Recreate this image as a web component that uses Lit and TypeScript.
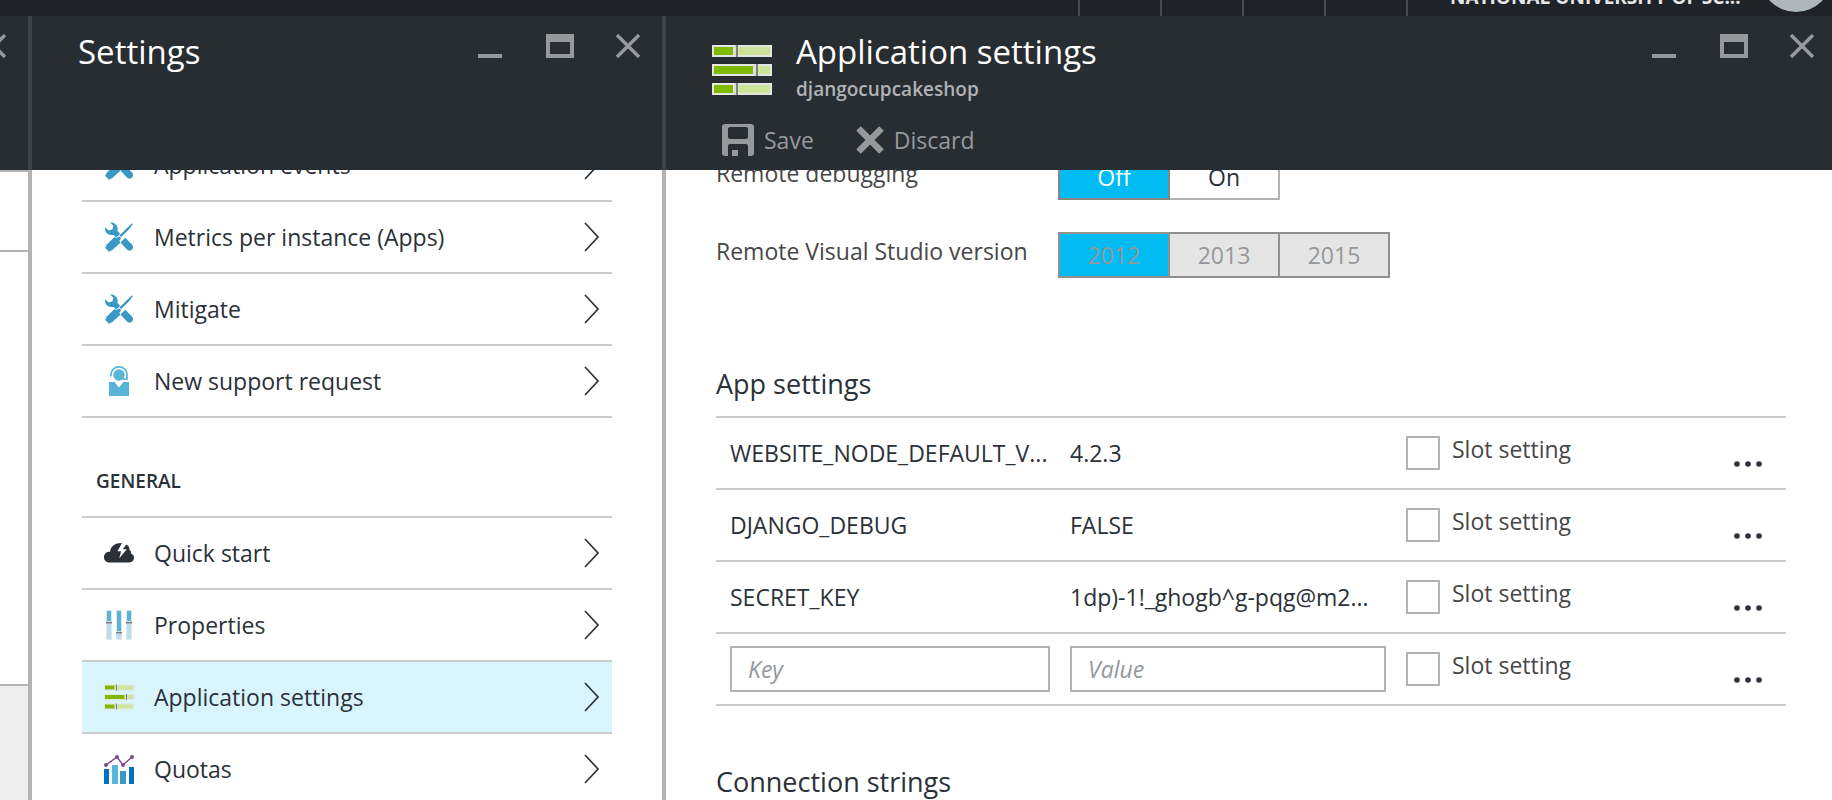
import { LitElement, html, css, svg } from "lit";
import { customElement, property, state } from "lit/decorators.js";

type IconName = "tools" | "support" | "cloud" | "properties" | "sliders" | "quotas";

const sliderBar = (y: number, split: number) => svg`
  <rect x="0" y=${y} width="60" height="12" fill="#e4e6e4"></rect>
  <rect x="2" y=${y + 2} width=${split - 2} height="8" fill="#7fba00"></rect>
  <rect x=${split + 5} y=${y + 2} width=${53 - split} height="8" fill="#cde49b"></rect>
  <rect x=${split + 1} y=${y} width="2" height="12" fill="#dcdcdc"></rect>
  <rect x=${split + 3} y=${y} width="2" height="12" fill="#808080"></rect>`;

const sliderIcon = (width: number, height: number) => html`
  <svg width=${width} height=${height} viewBox="0 0 60 52" aria-hidden="true">
    ${sliderBar(1, 21)}${sliderBar(20, 41)}${sliderBar(39, 21)}
  </svg>`;

const propertyBar = (x: number, split: number) => svg`
  <rect x=${x} y="0" width="6" height="30" fill="#e4e8ea"></rect>
  <rect x=${x + 1} y="1" width="4" height=${split - 1} fill="#59b4d9"></rect>
  <rect x=${x + 1} y=${split} width="4" height=${29 - split} fill="#b8dff0"></rect>
  <rect x=${x} y=${split} width="6" height="1" fill="#d8d8d8"></rect>
  <rect x=${x} y=${split + 1} width="6" height="1.4" fill="#7a7a7a"></rect>`;

const icons: Record<IconName, unknown> = {
  tools: html`<svg width="30" height="30" viewBox="0 0 30 30" aria-hidden="true">
    <path fill="#3999c6" d="M6 .6C9 0 12.600 2 13.400 5c.4 1.600.2 2.800.1 4.100l2.700 2.600-3.900 3.900-2.800-2.700c-3.500.8-7.500-.9-8.600-5.400L1 5.400l3.800 3 3.800-1.200.7-3.500z"></path>
    <path fill="#3999c6" d="M28.900 1.200l-.6 1.900-3.600 4.600-7.600 7.400-1.700-1.700 7.600-7.500 4.300-3.800z"></path>
    <path fill="#3999c6" d="M15.700 14.700l1.700 1.600-1.900 2.300.6 2.400-8.300 7.600-1.200-.1-1.300 1.400L1 25.700l1.200-1.300v-1.300l8.200-7.800 2.400.7 1.500-1.400z"></path>
    <path fill="#3999c6" d="M21.300 15.700l6.700 6.700c1.700 1.900 1.300 4-.2 5.300-1.500 1.300-3.300 1.300-4.900-.2l-6.500-6.900z"></path>
  </svg>`,
  support: html`<svg width="30" height="30" viewBox="0 0 30 30" aria-hidden="true">
    <circle cx="15" cy="9" r="5.700" fill="#59b4d9"></circle>
    <path fill="none" stroke="#59b4d9" stroke-width="1.700" d="M7 10.500V8.500a8 7.600 0 0 1 16 0v4.700h-4.500"></path>
    <path fill="#59b4d9" d="M5 16h5.500l4.500 5.500 4.500-5.500H25v14H5z"></path>
  </svg>`,
  cloud: html`<svg width="30" height="30" viewBox="0 0 30 30" aria-hidden="true">
    <path fill="#2b3138" d="M6 24.500c-3.700 0-6-2.200-6-5.300 0-3.300 2.600-5.600 6-5.300C6.500 9 10 5.600 15 5.200l3-.2-4.500 8.300h3.600l-1.800 6.900 7.500-9h-4l3.400-4.800c2 .7 3.500 2.500 3.300 5.500 2 .9 1.500 2.500 1.400 3.500 2 .9 3.100 2.100 3.100 4.200 0 3.100-1.700 4.900-4.600 4.900z"></path>
  </svg>`,
  properties: html`<svg width="30" height="30" viewBox="0 0 30 30" aria-hidden="true">
    ${propertyBar(2, 11)}${propertyBar(12, 21)}${propertyBar(22, 11)}
  </svg>`,
  sliders: sliderIcon(30, 26),
  quotas: html`<svg width="30" height="30" viewBox="0 0 30 30" aria-hidden="true">
    <path fill="#0072c6" d="M0 15h5v15H0zM25 13h5v17h-5z"></path>
    <path fill="#59b4d9" d="M8 11h6v19H8z"></path>
    <path fill="#3999c6" d="M16 17h6v13h-6z"></path>
    <path fill="none" stroke="#7b3a96" stroke-width="1.300" d="M2 11L13 3l6 8 9-8"></path>
    <g fill="#804998"><circle cx="2" cy="11" r="2"></circle><circle cx="13" cy="3" r="2"></circle><circle cx="19" cy="11" r="2"></circle><circle cx="28" cy="3" r="2"></circle></g>
  </svg>`,
};

const closeGlyph = html`<svg width="24" height="24" viewBox="0 0 24 24" aria-hidden="true">
  <path d="M1 1l22 22M23 1L1 23" stroke="#97999c" stroke-width="3.400" fill="none"></path>
</svg>`;

const base = css`
  *, *::before, *::after { box-sizing: border-box; }
  button {
    margin: 0;
    padding: 0;
    border: 0;
    background: none;
    font: inherit;
    color: inherit;
    cursor: pointer;
  }
  svg { display: block; flex: none; }
  h1, h2, h3, p, ul { margin: 0; padding: 0; }
`;

@customElement("blade-controls")
export class BladeControls extends LitElement {
  static styles = [base, css`
    .controls { display: flex; align-items: center; }
    .minimize { margin-right: 44px; }
    .maximize { margin-right: 42px; }
  `];

  render() {
    return html`<div class="controls">
      <button class="minimize" aria-label="Minimize">
        <svg width="24" height="24" viewBox="0 0 24 24" aria-hidden="true"><path d="M0 20h24v4H0z" fill="#97999c"></path></svg>
      </button>
      <button class="maximize" aria-label="Maximize">
        <svg width="28" height="24" viewBox="0 0 28 24" aria-hidden="true"><path fill-rule="evenodd" d="M0 0h28v24H0zM4 8v12h20V8z" fill="#97999c"></path></svg>
      </button>
      <button aria-label="Close">${closeGlyph}</button>
    </div>`;
  }
}

@customElement("settings-row")
export class SettingsRow extends LitElement {
  @property() label = "";
  @property() icon: IconName = "tools";
  @property({ type: Boolean }) selected = false;

  static styles = [base, css`
    :host { display: block; }
    .row {
      display: flex;
      align-items: center;
      height: 72px;
      padding: 0 12px 0 22px;
      border-bottom: 2px solid #cbcbcb;
      color: #2b3138;
      text-decoration: none;
    }
    .selected { background: #d8f5fe; }
    .icon { flex: none; width: 30px; margin-right: 20px; }
    .label { flex: 1; min-width: 0; white-space: nowrap; }
  `];

  render() {
    return html`<a class="row ${this.selected ? "selected" : ""}" href="#">
      <span class="icon">${icons[this.icon]}</span>
      <span class="label">${this.label}</span>
      <svg width="17" height="30" viewBox="0 0 17 30" aria-hidden="true">
        <path d="M2 1l13 14L2 29" fill="none" stroke="#2b3138" stroke-width="1.700"></path>
      </svg>
    </a>`;
  }
}

@customElement("option-picker")
export class OptionPicker extends LitElement {
  @property() label = "";
  @property({ attribute: false }) options: string[] = [];
  @property() value = "";
  @property({ type: Boolean }) disabled = false;

  static styles = [base, css`
    :host { display: block; }
    .field { display: flex; align-items: flex-start; }
    .name { width: 342px; line-height: 38px; color: #474747; }
    .group { display: flex; }
    .option {
      width: 110px;
      height: 46px;
      border: 2px solid #b3b3b3;
      border-left: 0;
      background: #fff;
      color: #2b3138;
    }
    .option:first-child { width: 112px; border-left: 2px solid #b3b3b3; }
    .option.active, .option.active:first-child {
      border-color: #868686;
      background: #00bcf2;
      color: #fff;
    }
    .option:disabled, .option.active:disabled {
      border-color: #909090;
      color: #95989b;
      cursor: default;
    }
    .option:disabled:not(.active) { background: #e5e5e5; }
  `];

  render() {
    return html`<div class="field">
      <span class="name" id="name">${this.label}</span>
      <div class="group" role="group" aria-labelledby="name">
        ${this.options.map((o) => html`<button
          class="option ${o === this.value ? "active" : ""}"
          aria-pressed=${o === this.value ? "true" : "false"}
          ?disabled=${this.disabled}
          @click=${() => { this.value = o; }}>${o}</button>`)}
      </div>
    </div>`;
  }
}

@customElement("app-settings-table")
export class AppSettingsTable extends LitElement {
  @state() private rows = [
    { key: "WEBSITE_NODE_DEFAULT_V...", value: "4.2.3" },
    { key: "DJANGO_DEBUG", value: "FALSE" },
    { key: "SECRET_KEY", value: "1dp)-1!_ghogb^g-pqg@m2..." },
  ];

  static styles = [base, css`
    :host { display: block; }
    .table {
      width: 100%;
      table-layout: fixed;
      border-collapse: separate;
      border-spacing: 0;
      border-top: 2px solid #cbcbcb;
      color: #2b3138;
    }
    td { height: 72px; padding: 0; border-bottom: 2px solid #cbcbcb; white-space: nowrap; }
    .key { width: 354px; padding: 0 20px 0 14px; }
    .value { width: 336px; padding-right: 20px; }
    .more { width: 60px; padding: 0 16px 13px 0; vertical-align: bottom; }
    .more button { display: block; margin-left: auto; padding: 8px; }
    .text {
      display: block;
      width: 100%;
      height: 46px;
      padding: 0 16px;
      border: 2px solid #b3b3b3;
      border-radius: 0;
      background: #fff;
      font: inherit;
      color: inherit;
    }
    .text::placeholder { color: #95989b; font-style: italic; opacity: 1; }
    .slot { display: flex; align-items: flex-start; gap: 12px; line-height: 26px; color: #474747; }
    .check {
      appearance: none;
      flex: none;
      width: 34px;
      height: 34px;
      margin: 0;
      border: 2px solid #b3b3b3;
      background: #fff;
    }
    .check:checked { background: #00bcf2; }
  `];

  private tail() {
    return html`
      <td><label class="slot"><input class="check" type="checkbox">Slot setting</label></td>
      <td class="more"><button aria-label="More">
        <svg width="28" height="6" viewBox="0 0 28 6" aria-hidden="true" fill="#2b3138">
          <circle cx="3" cy="3" r="2.800"></circle><circle cx="14" cy="3" r="2.800"></circle><circle cx="25" cy="3" r="2.800"></circle>
        </svg>
      </button></td>`;
  }

  render() {
    return html`<table class="table" aria-label="App settings">
      <tbody>
        ${this.rows.map((r) => html`<tr><td class="key">${r.key}</td><td class="value">${r.value}</td>${this.tail()}</tr>`)}
        <tr>
          <td class="key"><input class="text" type="text" placeholder="Key" aria-label="Key"></td>
          <td class="value"><input class="text" type="text" placeholder="Value" aria-label="Value"></td>
          ${this.tail()}
        </tr>
      </tbody>
    </table>`;
  }
}

@customElement("app-root")
export class AppRoot extends LitElement {
  static styles = [base, css`
    :host {
      display: flex;
      flex-direction: column;
      height: 100vh;
      overflow: hidden;
      background: #fff;
      font-family: "Open Sans", "Segoe UI", sans-serif;
      font-size: 23px;
      line-height: 30px;
      color: #2b3138;
    }
    /* The page is scrolled so that only the foot of the top bar shows. */
    .topbar {
      flex: none;
      display: flex;
      justify-content: flex-end;
      height: 80px;
      margin-top: -64px;
      background: #1f2328;
      color: #e6e6e6;
    }
    .tool { width: 82px; border-left: 2px solid #4a4c50; }
    .account {
      display: flex;
      align-items: center;
      justify-content: space-between;
      width: 426px;
      padding-left: 42px;
      border-left: 2px solid #4a4c50;
    }
    .tenant {
      align-self: flex-end;
      padding-bottom: 6px;
      font-size: 19px;
      line-height: 26px;
      font-weight: 700;
      white-space: nowrap;
    }
    .avatar { flex: none; width: 72px; height: 72px; border-radius: 50%; background: #b0b7bc; }

    .blades { flex: 1; min-height: 0; display: flex; }
    .blade { display: flex; flex-direction: column; min-width: 0; }
    .previous { flex: none; width: 32px; }
    .settings { flex: none; width: 634px; }
    .application { flex: 1; }
    .head {
      flex: none;
      height: 154px;
      background: #282d31;
      color: #fff;
    }
    .body { flex: 1; min-height: 0; overflow: hidden; }
    .previous .head, .settings .head { border-right: 4px solid #3e4347; }
    .previous .body, .settings .body { border-right: 4px solid #b3b3b3; }

    .previous .head { display: flex; justify-content: flex-end; align-items: flex-start; padding: 18px 22px 0 0; overflow: hidden; }
    .previous .body { display: flex; flex-direction: column; border-top: 2px solid #b3b3b3; }
    .tile { flex: none; height: 80px; border-bottom: 2px solid #b3b3b3; }
    .tile.tall { height: 434px; }
    .rest { flex: 1; background: #eee; }

    .titlebar { display: flex; align-items: flex-start; }
    .settings .titlebar { padding: 14px 22px 0 46px; }
    .application .titlebar { padding: 14px 18px 0 46px; }
    .titles { flex: 1; min-width: 0; }
    .title { font-size: 33px; line-height: 44px; font-weight: 400; white-space: nowrap; }
    .subtitle { margin-top: 2px; font-size: 19px; line-height: 26px; font-weight: 600; color: #b0b3b6; }
    blade-controls { margin-top: 4px; }
    .emblem { margin: 14px 24px 0 0; }
    .commands { display: flex; gap: 42px; padding: 20px 0 0 56px; color: #97999c; }
    .command { display: flex; align-items: center; gap: 10px; height: 36px; }

    /* Lists are scrolled part of the way down beneath the blade header. */
    .list { margin: -40px 50px 0; }
    .group-title {
      padding: 48px 14px 20px;
      border-bottom: 2px solid #cbcbcb;
      font-size: 19px;
      line-height: 30px;
      font-weight: 600;
    }
    .form { margin: -16px 46px 0 50px; }
    .fields { display: grid; gap: 32px; }
    .section { font-size: 27px; line-height: 36px; font-weight: 400; }
    .section.first { padding: 88px 0 14px; }
    .section.next { padding-top: 58px; }
  `];

  render() {
    return html`
      <header class="topbar">
        <div class="tool"></div><div class="tool"></div><div class="tool"></div><div class="tool"></div>
        <div class="account">
          <span class="tenant">NATIONAL UNIVERSITY OF SC...</span>
          <span class="avatar"></span>
        </div>
      </header>
      <main class="blades">
        <section class="blade previous">
          <div class="head"><button aria-label="Close">${closeGlyph}</button></div>
          <div class="body"><div class="tile"></div><div class="tile tall"></div><div class="rest"></div></div>
        </section>
        <section class="blade settings">
          <div class="head">
            <div class="titlebar">
              <div class="titles"><h1 class="title">Settings</h1></div>
              <blade-controls></blade-controls>
            </div>
          </div>
          <div class="body">
            <nav class="list">
              <settings-row icon="tools" label="Application events"></settings-row>
              <settings-row icon="tools" label="Metrics per instance (Apps)"></settings-row>
              <settings-row icon="tools" label="Mitigate"></settings-row>
              <settings-row icon="support" label="New support request"></settings-row>
              <h3 class="group-title">GENERAL</h3>
              <settings-row icon="cloud" label="Quick start"></settings-row>
              <settings-row icon="properties" label="Properties"></settings-row>
              <settings-row icon="sliders" label="Application settings" selected></settings-row>
              <settings-row icon="quotas" label="Quotas"></settings-row>
            </nav>
          </div>
        </section>
        <section class="blade application">
          <div class="head">
            <div class="titlebar">
              <div class="emblem">${sliderIcon(60, 52)}</div>
              <div class="titles">
                <h1 class="title">Application settings</h1>
                <p class="subtitle">djangocupcakeshop</p>
              </div>
              <blade-controls></blade-controls>
            </div>
            <div class="commands">
              <button class="command">
                <svg width="32" height="32" viewBox="0 0 32 32" aria-hidden="true">
                  <path fill="#97999c" fill-rule="evenodd" d="M3 0h26a3 3 0 0 1 3 3v26a3 3 0 0 1-3 3h-3V22a2 2 0 0 0-2-2H8a2 2 0 0 0-2 2v10H3a3 3 0 0 1-3-3V3a3 3 0 0 1 3-3zM8 3a2 2 0 0 0-2 2v8a2 2 0 0 0 2 2h16a2 2 0 0 0 2-2V5a2 2 0 0 0-2-2z"></path>
                  <path fill="#97999c" d="M10 26h6v6h-6z"></path>
                </svg>
                Save
              </button>
              <button class="command">
                <svg width="28" height="28" viewBox="0 0 28 28" aria-hidden="true">
                  <path d="M2.500 2.500l23 23M25.500 2.500l-23 23" stroke="#97999c" stroke-width="6.500" fill="none"></path>
                </svg>
                Discard
              </button>
            </div>
          </div>
          <div class="body">
            <div class="form">
              <div class="fields">
                <option-picker label="Remote debugging" .options=${["Off", "On"]} value="Off"></option-picker>
                <option-picker label="Remote Visual Studio version" .options=${["2012", "2013", "2015"]} value="2012" disabled></option-picker>
              </div>
              <h2 class="section first">App settings</h2>
              <app-settings-table></app-settings-table>
              <h2 class="section next">Connection strings</h2>
            </div>
          </div>
        </section>
      </main>`;
  }
}
